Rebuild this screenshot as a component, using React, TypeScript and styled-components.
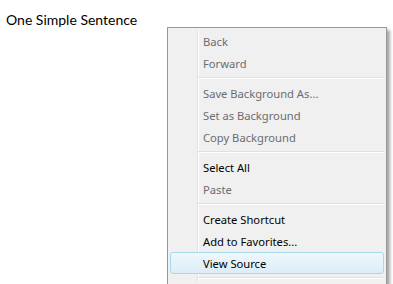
import React from "react";
import styled, { createGlobalStyle } from "styled-components";

const Global = createGlobalStyle`
  html, body { margin: 0; padding: 0; background: #ffffff; }
  body { width: 393px; height: 284px; overflow: hidden; }
`;

const Page = styled.div`
  position: relative;
  width: 393px;
  height: 284px;
  background: #ffffff;
`;

const Sentence = styled.p`
  margin: 0;
  padding: 10px 0 0 6px;
  font-family: Lato, "Open Sans", sans-serif;
  font-size: 14px;
  line-height: 20px;
  color: #000000;
`;

const Menu = styled.div`
  position: absolute;
  left: 167px;
  top: 27px;
  width: 220px;
  box-sizing: border-box;
  border: 1px solid #979797;
  background: #f0f0f0;
  padding: 2px;
  box-shadow: 3px 3px 3px rgba(0, 0, 0, 0.35);
  font-family: "Noto Sans", "Open Sans", sans-serif;
  font-size: 11.2px;
`;

const Inner = styled.div`
  display: flex;
  flex-direction: column;
  background: linear-gradient(
    to right,
    transparent 0,
    transparent 27px,
    #e2e3e3 27px,
    #e2e3e3 28px,
    #ffffff 28px,
    #ffffff 29px,
    transparent 29px
  );
`;

const Item = styled.div<{ $disabled?: boolean; $active?: boolean }>`
  box-sizing: border-box;
  height: 22px;
  display: flex;
  align-items: center;
  padding-left: 32px;
  border-radius: 3px;
  border: 1px solid ${(p) => (p.$active ? "#a8d8eb" : "transparent")};
  background: ${(p) =>
    p.$active ? "linear-gradient(to bottom, #eef7fc 0%, #dcedf8 100%)" : "transparent"};
  color: ${(p) => (p.$disabled ? "#6d6d6d" : "#000000")};
  white-space: nowrap;
`;

const Separator = styled.div`
  height: 8px;
  display: flex;
  flex-direction: column;
  justify-content: center;
  padding-left: 28px;
  &::before {
    content: "";
    display: block;
    height: 1px;
    background: #e0e0e0;
  }
  &::after {
    content: "";
    display: block;
    height: 1px;
    background: #ffffff;
  }
`;

type Entry = { label?: string; disabled?: boolean; active?: boolean; sep?: boolean };

const entries: Entry[] = [
  { label: "Back", disabled: true },
  { label: "Forward", disabled: true },
  { sep: true },
  { label: "Save Background As...", disabled: true },
  { label: "Set as Background", disabled: true },
  { label: "Copy Background", disabled: true },
  { sep: true },
  { label: "Select All" },
  { label: "Paste", disabled: true },
  { sep: true },
  { label: "Create Shortcut" },
  { label: "Add to Favorites..." },
  { label: "View Source", active: true },
  { sep: true },
];

export default function App() {
  return (
    <Page>
      <Global />
      <Sentence>One Simple Sentence</Sentence>
      <Menu>
        <Inner>
          {entries.map((e, i) =>
            e.sep ? (
              <Separator key={i} />
            ) : (
              <Item key={i} $disabled={e.disabled} $active={e.active}>
                {e.label}
              </Item>
            )
          )}
        </Inner>
      </Menu>
    </Page>
  );
}
